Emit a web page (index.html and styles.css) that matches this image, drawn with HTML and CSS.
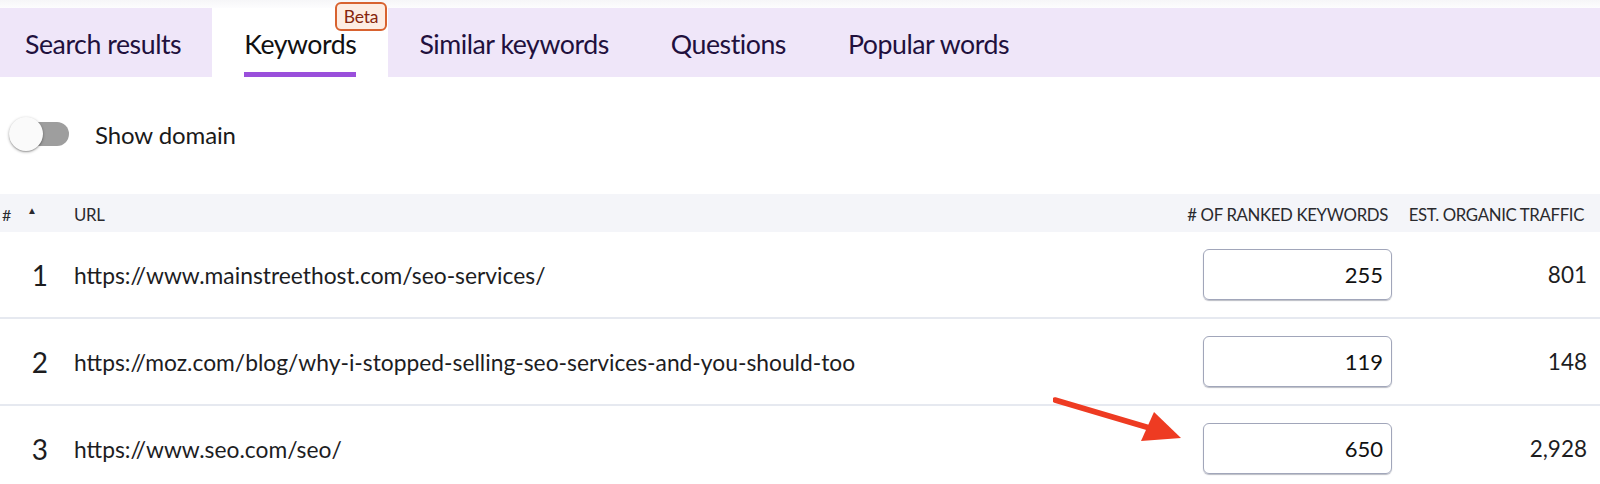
FILE: index.html
```html
<!DOCTYPE html>
<html>
<head>
<meta charset="utf-8">
<link rel="stylesheet" href="styles.css">
</head>
<body>
<div class="topstrip"></div>
<nav class="tabs">
  <div class="tab first">Search results</div>
  <div class="tab active"><span class="label">Keywords</span><span class="beta">Beta</span></div>
  <div class="tab">Similar keywords</div>
  <div class="tab">Questions</div>
  <div class="tab">Popular words</div>
</nav>
<div class="toolbar">
  <span class="switch"><span class="track"></span><span class="thumb"></span></span>
  <span class="switch-label">Show domain</span>
</div>
<div class="table">
  <div class="row head">
    <div class="c-num"><span class="hash">#</span><span class="sort">&#9650;</span></div>
    <div class="c-url">URL</div>
    <div class="c-kw"><span>#&nbsp;OF RANKED KEYWORDS</span></div>
    <div class="c-tr"><span>EST. ORGANIC TRAFFIC</span></div>
  </div>
  <div class="row">
    <div class="c-num">1</div>
    <div class="c-url">https://www.mainstreethost.com/seo-services/</div>
    <div class="c-kw"><div class="box">255</div></div>
    <div class="c-tr">801</div>
  </div>
  <div class="row">
    <div class="c-num">2</div>
    <div class="c-url">https://moz.com/blog/why-i-stopped-selling-seo-services-and-you-should-too</div>
    <div class="c-kw"><div class="box">119</div></div>
    <div class="c-tr">148</div>
  </div>
  <div class="row">
    <div class="c-num">3</div>
    <div class="c-url">https://www.seo.com/seo/</div>
    <div class="c-kw"><div class="box">650</div></div>
    <div class="c-tr">2,928</div>
  </div>
  <svg class="arrow" width="140" height="50" viewBox="0 0 140 50">
    <line x1="2" y1="4" x2="100" y2="33" stroke="#ee3b22" stroke-width="5.5" stroke-linecap="round"/>
    <polygon points="128,42 88,45 101,16" fill="#ee3b22"/>
  </svg>
</div>
</body>
</html>
```

FILE: styles.css
```css
* { box-sizing: border-box; }
html, body { margin: 0; padding: 0; background: #fff; }
body {
  font-family: Lato, "Open Sans", sans-serif;
  color: #1d1d1f;
  width: 1600px;
  height: 484px;
  overflow: hidden;
}
.topstrip {
  height: 8px;
  background: linear-gradient(#f6f6f8, #fdfdfe);
}
.tabs {
  display: flex;
  height: 69px;
  background: #efe6f9;
}
.tab {
  position: relative;
  display: flex;
  align-items: center;
  padding: 0 31px;
  padding-top: 3px;
  font-size: 26.7px;
  color: #21103d;
  letter-spacing: -0.45px;
}
.tab.first { padding-left: 25px; }
.tab.active {
  background: #fff;
  color: #111;
  padding: 0 32px;
}
.tab.active .label {
  align-self: stretch;
  display: flex;
  align-items: center;
  border-bottom: 5px solid #9a4fdb;
  padding-top: 8px;
}
.beta {
  position: absolute;
  top: -6px;
  right: 1px;
  height: 29px;
  padding: 0 7px;
  display: flex;
  align-items: center;
  font-size: 17.5px;
  letter-spacing: -0.2px;
  color: #86250b;
  background: #fdede3;
  border: 2px solid #d8622f;
  border-radius: 6px;
}
.toolbar {
  height: 117px;
  display: flex;
  align-items: center;
  padding-left: 9px;
  padding-bottom: 3px;
}
.switch {
  position: relative;
  width: 62px;
  height: 34px;
  display: inline-block;
}
.track {
  position: absolute;
  left: 4px;
  top: 5px;
  width: 56px;
  height: 24px;
  border-radius: 12px;
  background: #9e9e9e;
}
.thumb {
  position: absolute;
  left: 0;
  top: 0;
  width: 34px;
  height: 34px;
  border-radius: 50%;
  background: #fafafa;
  box-shadow: 0 1px 3px rgba(0,0,0,0.35), 0 1px 1px rgba(0,0,0,0.15);
}
.switch-label {
  margin-left: 24px;
  font-size: 24px;
  letter-spacing: -0.1px;
  color: #1a1a1a;
}
.table { position: relative; }
.row {
  display: grid;
  grid-template-columns: 74px 1fr 190px 194px;
  padding-right: 13px;
  align-items: center;
  height: 87px;
  border-bottom: 2px solid #e6e9f0;
  font-size: 22.8px;
  color: #1d1d1f;
}
.row.head {
  height: 38px;
  background: #f4f5f9;
  border-bottom: none;
  font-size: 16.8px;
  letter-spacing: -0.35px;
  color: #2a2a2e;
  padding-top: 2px;
  white-space: nowrap;
}
.row.head .c-num {
  display: flex;
  align-items: center;
  padding-left: 2px;
  font-size: 16px;
}
.row.head .sort {
  font-size: 10px;
  margin-left: 16px;
  margin-top: -8px;
}
.row .c-num {
  font-size: 28px;
  text-align: right;
  padding-right: 26px;
}
.row.head .c-num { text-align: left; padding-right: 0; }
.c-kw { text-align: right; }
.row.head .c-kw,
.row.head .c-tr {
  display: flex;
  justify-content: flex-end;
}
.row.head .c-kw { padding-right: 5px; }
.c-tr { text-align: right; font-size: 22.5px; }
.row.head .c-tr { padding-right: 3px; font-size: 16.8px; }
.box {
  width: 189px;
  height: 51px;
  border: 1.5px solid #a1a6ba;
  border-radius: 6px;
  box-shadow: 0 1px 1px rgba(60,65,90,0.35);
  display: flex;
  align-items: center;
  justify-content: flex-end;
  padding-right: 8px;
  font-size: 22px;
  color: #111;
}
.arrow {
  position: absolute;
  left: 1053px;
  top: 202px;
}
```
